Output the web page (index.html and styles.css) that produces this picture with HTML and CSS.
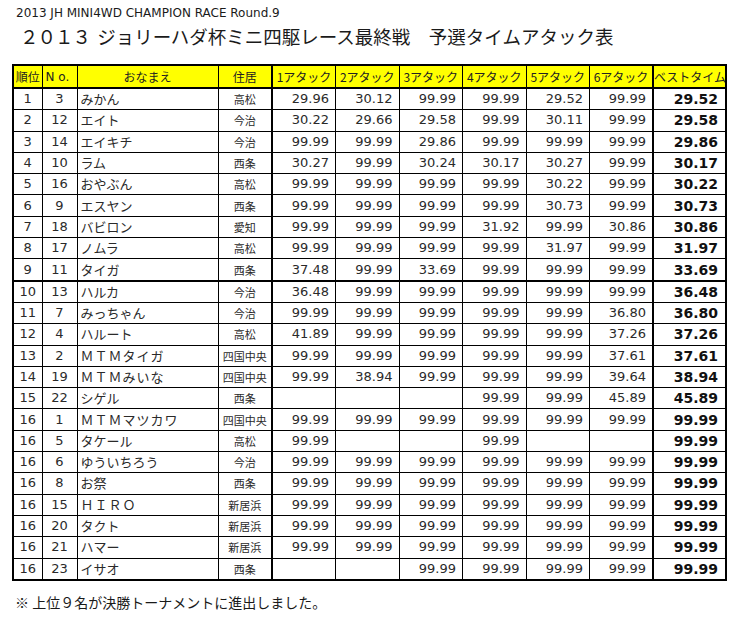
FILE: index.html
```html
<!DOCTYPE html>
<html lang="ja">
<head>
<meta charset="utf-8">
<title>2013 JH MINI4WD CHAMPION RACE Round.9</title>
<link rel="stylesheet" href="styles.css">
</head>
<body>
<div class="page">
  <p class="sub">2013 JH MINI4WD CHAMPION RACE Round.9</p>
  <h1 class="title"><span class="year">２０１３</span> ジョリーハダ杯ミニ四駆レース最終戦　予選タイムアタック表</h1>
  <table class="results">
    <colgroup>
      <col class="c-rank"><col class="c-no"><col class="c-name"><col class="c-area">
      <col class="c-t"><col class="c-t"><col class="c-t"><col class="c-t"><col class="c-t"><col class="c-t">
      <col class="c-best">
    </colgroup>
    <thead>
      <tr>
        <th>順位</th><th class="h-no">N o.</th><th>おなまえ</th><th class="sep">住居</th>
        <th>1アタック</th><th>2アタック</th><th>3アタック</th><th>4アタック</th><th>5アタック</th><th class="sepl">6アタック</th><th class="best">ベストタイム</th>
      </tr>
    </thead>
    <tbody>
      <tr><td class="rank">1</td><td class="no">3</td><td class="name">みかん</td><td class="area sep">高松</td><td class="t">29.96</td><td class="t">30.12</td><td class="t">99.99</td><td class="t">99.99</td><td class="t">29.52</td><td class="t sepl">99.99</td><td class="best">29.52</td></tr>
      <tr><td class="rank">2</td><td class="no">12</td><td class="name">エイト</td><td class="area sep">今治</td><td class="t">30.22</td><td class="t">29.66</td><td class="t">29.58</td><td class="t">99.99</td><td class="t">30.11</td><td class="t sepl">99.99</td><td class="best">29.58</td></tr>
      <tr><td class="rank">3</td><td class="no">14</td><td class="name">エイキチ</td><td class="area sep">今治</td><td class="t">99.99</td><td class="t">99.99</td><td class="t">29.86</td><td class="t">99.99</td><td class="t">99.99</td><td class="t sepl">99.99</td><td class="best">29.86</td></tr>
      <tr><td class="rank">4</td><td class="no">10</td><td class="name">ラム</td><td class="area sep">西条</td><td class="t">30.27</td><td class="t">99.99</td><td class="t">30.24</td><td class="t">30.17</td><td class="t">30.27</td><td class="t sepl">99.99</td><td class="best">30.17</td></tr>
      <tr><td class="rank">5</td><td class="no">16</td><td class="name">おやぶん</td><td class="area sep">高松</td><td class="t">99.99</td><td class="t">99.99</td><td class="t">99.99</td><td class="t">99.99</td><td class="t">30.22</td><td class="t sepl">99.99</td><td class="best">30.22</td></tr>
      <tr><td class="rank">6</td><td class="no">9</td><td class="name">エスヤン</td><td class="area sep">西条</td><td class="t">99.99</td><td class="t">99.99</td><td class="t">99.99</td><td class="t">99.99</td><td class="t">30.73</td><td class="t sepl">99.99</td><td class="best">30.73</td></tr>
      <tr><td class="rank">7</td><td class="no">18</td><td class="name">バビロン</td><td class="area sep">愛知</td><td class="t">99.99</td><td class="t">99.99</td><td class="t">99.99</td><td class="t">31.92</td><td class="t">99.99</td><td class="t sepl">30.86</td><td class="best">30.86</td></tr>
      <tr><td class="rank">8</td><td class="no">17</td><td class="name">ノムラ</td><td class="area sep">高松</td><td class="t">99.99</td><td class="t">99.99</td><td class="t">99.99</td><td class="t">99.99</td><td class="t">31.97</td><td class="t sepl">99.99</td><td class="best">31.97</td></tr>
      <tr class="cut"><td class="rank">9</td><td class="no">11</td><td class="name">タイガ</td><td class="area sep">西条</td><td class="t">37.48</td><td class="t">99.99</td><td class="t">33.69</td><td class="t">99.99</td><td class="t">99.99</td><td class="t sepl">99.99</td><td class="best">33.69</td></tr>
      <tr><td class="rank">10</td><td class="no">13</td><td class="name">ハルカ</td><td class="area sep">今治</td><td class="t">36.48</td><td class="t">99.99</td><td class="t">99.99</td><td class="t">99.99</td><td class="t">99.99</td><td class="t sepl">99.99</td><td class="best">36.48</td></tr>
      <tr><td class="rank">11</td><td class="no">7</td><td class="name">みっちゃん</td><td class="area sep">今治</td><td class="t">99.99</td><td class="t">99.99</td><td class="t">99.99</td><td class="t">99.99</td><td class="t">99.99</td><td class="t sepl">36.80</td><td class="best">36.80</td></tr>
      <tr><td class="rank">12</td><td class="no">4</td><td class="name">ハルート</td><td class="area sep">高松</td><td class="t">41.89</td><td class="t">99.99</td><td class="t">99.99</td><td class="t">99.99</td><td class="t">99.99</td><td class="t sepl">37.26</td><td class="best">37.26</td></tr>
      <tr><td class="rank">13</td><td class="no">2</td><td class="name wide">ＭＴＭタイガ</td><td class="area sep">四国中央</td><td class="t">99.99</td><td class="t">99.99</td><td class="t">99.99</td><td class="t">99.99</td><td class="t">99.99</td><td class="t sepl">37.61</td><td class="best">37.61</td></tr>
      <tr><td class="rank">14</td><td class="no">19</td><td class="name wide">ＭＴＭみいな</td><td class="area sep">四国中央</td><td class="t">99.99</td><td class="t">38.94</td><td class="t">99.99</td><td class="t">99.99</td><td class="t">99.99</td><td class="t sepl">39.64</td><td class="best">38.94</td></tr>
      <tr><td class="rank">15</td><td class="no">22</td><td class="name">シゲル</td><td class="area sep">西条</td><td class="t"></td><td class="t"></td><td class="t"></td><td class="t">99.99</td><td class="t">99.99</td><td class="t sepl">45.89</td><td class="best">45.89</td></tr>
      <tr><td class="rank">16</td><td class="no">1</td><td class="name wide">ＭＴＭマツカワ</td><td class="area sep">四国中央</td><td class="t">99.99</td><td class="t">99.99</td><td class="t">99.99</td><td class="t">99.99</td><td class="t">99.99</td><td class="t sepl">99.99</td><td class="best">99.99</td></tr>
      <tr><td class="rank">16</td><td class="no">5</td><td class="name">タケール</td><td class="area sep">高松</td><td class="t">99.99</td><td class="t"></td><td class="t"></td><td class="t">99.99</td><td class="t"></td><td class="t sepl"></td><td class="best">99.99</td></tr>
      <tr><td class="rank">16</td><td class="no">6</td><td class="name">ゆういちろう</td><td class="area sep">今治</td><td class="t">99.99</td><td class="t">99.99</td><td class="t">99.99</td><td class="t">99.99</td><td class="t">99.99</td><td class="t sepl">99.99</td><td class="best">99.99</td></tr>
      <tr><td class="rank">16</td><td class="no">8</td><td class="name">お祭</td><td class="area sep">西条</td><td class="t">99.99</td><td class="t">99.99</td><td class="t">99.99</td><td class="t">99.99</td><td class="t">99.99</td><td class="t sepl">99.99</td><td class="best">99.99</td></tr>
      <tr><td class="rank">16</td><td class="no">15</td><td class="name wide">ＨＩＲＯ</td><td class="area sep">新居浜</td><td class="t">99.99</td><td class="t">99.99</td><td class="t">99.99</td><td class="t">99.99</td><td class="t">99.99</td><td class="t sepl">99.99</td><td class="best">99.99</td></tr>
      <tr><td class="rank">16</td><td class="no">20</td><td class="name">タクト</td><td class="area sep">新居浜</td><td class="t">99.99</td><td class="t">99.99</td><td class="t">99.99</td><td class="t">99.99</td><td class="t">99.99</td><td class="t sepl">99.99</td><td class="best">99.99</td></tr>
      <tr><td class="rank">16</td><td class="no">21</td><td class="name">ハマー</td><td class="area sep">新居浜</td><td class="t">99.99</td><td class="t">99.99</td><td class="t">99.99</td><td class="t">99.99</td><td class="t">99.99</td><td class="t sepl">99.99</td><td class="best">99.99</td></tr>
      <tr><td class="rank">16</td><td class="no">23</td><td class="name">イサオ</td><td class="area sep">西条</td><td class="t"></td><td class="t"></td><td class="t">99.99</td><td class="t">99.99</td><td class="t">99.99</td><td class="t sepl">99.99</td><td class="best">99.99</td></tr>
    </tbody>
  </table>
  <p class="note">※ 上位９名が決勝トーナメントに進出しました。</p>
</div>
</body>
</html>
```

FILE: styles.css
```css
html, body {
  margin: 0;
  padding: 0;
  background: #ffffff;
}

body {
  color: #1a1a1a;
  font-family: "DejaVu Sans", "Noto Sans CJK JP", sans-serif;
}

.page {
  padding: 5px 0 0 12px;
}

.sub {
  margin: 0 0 0 4px;
  font-size: 12px;
  line-height: 16px;
  color: #1a1a1a;
}

.title {
  margin: 2px 0 0 8px;
  font-family: "Noto Sans CJK JP", sans-serif;
  font-weight: normal;
  font-size: 18.5px;
  line-height: 26px;
  color: #1a1a1a;
  white-space: nowrap;
}

.title .year {
  letter-spacing: -1px;
  margin-right: 3px;
}

.results {
  margin-top: 15px;
  border-collapse: collapse;
  table-layout: fixed;
  width: 713px;
  border: 2px solid #000;
}

.c-rank { width: 29px; }
.c-no { width: 35px; }
.c-name { width: 141px; }
.c-area { width: 54px; }
.c-t { width: 63.5px; }
.c-best { width: 73px; }

.results th,
.results td {
  border: 1px solid #000;
  padding: 0;
  white-space: nowrap;
  overflow: hidden;
}

.results th {
  background: #ffff00;
  font-family: "Noto Sans CJK JP", sans-serif;
  font-weight: normal;
  font-size: 12px;
  height: 21px;
  line-height: 20px;
  text-align: center;
  color: #222;
  border-bottom: 2px solid #000;
}

.results th.h-no {
  text-align: left;
  padding-left: 3px;
  font-family: "DejaVu Sans", sans-serif;
  font-size: 12px;
}

.results td {
  height: 20.3px;
  line-height: 18px;
  font-size: 13px;
  color: #2a2a2a;
}

.results .sep {
  border-right: 2px solid #000;
}

.results .sepl {
  border-right: 2px solid #000;
}

.results tr.cut td {
  border-bottom: 2px solid #000;
}

.rank,
.no {
  text-align: center;
}

.name {
  font-family: "Noto Sans CJK JP", sans-serif;
  padding-left: 3px !important;
  font-size: 13px;
}

.name.wide {
  letter-spacing: 1px;
}

.area {
  font-family: "Noto Sans CJK JP", sans-serif;
  font-size: 11px !important;
  text-align: center;
}

.t {
  text-align: right;
  padding-right: 6px !important;
}

td.best {
  text-align: right;
  padding-right: 7px !important;
  font-weight: bold;
  font-size: 14px;
  color: #111;
}

.note {
  margin: 11px 0 0 3px;
  font-family: "Noto Sans CJK JP", sans-serif;
  font-size: 14px;
  line-height: 20px;
  color: #1a1a1a;
}
```
